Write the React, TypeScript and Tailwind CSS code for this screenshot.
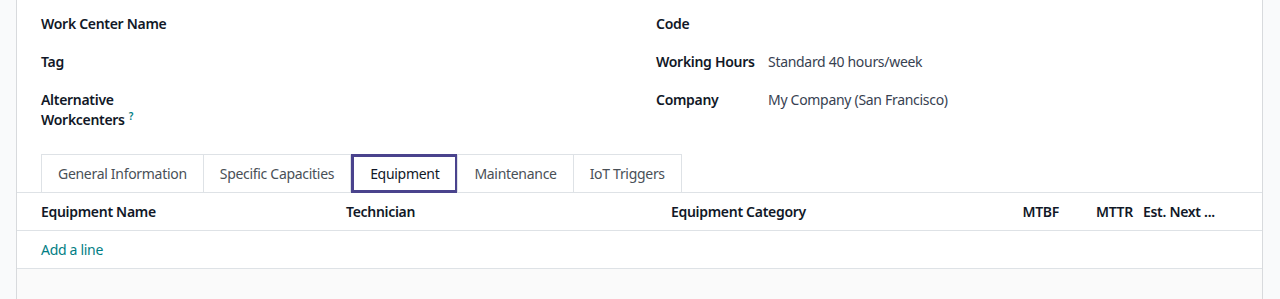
const tabs = ["General Information", "Specific Capacities", "Equipment", "Maintenance", "IoT Triggers"];

function Field({ label, value, labelClass = "w-[112px]" }: { label: React.ReactNode; value?: string; labelClass?: string }) {
  return (
    <div className="flex min-h-[38px] items-start py-[8px]">
      <div className={`${labelClass} shrink-0 text-[14px] font-semibold leading-[20px] text-[#111827]`}>{label}</div>
      {value && <div className="text-[14px] leading-[20px] text-[#374151]">{value}</div>}
    </div>
  );
}

export default function App() {
  return (
    <div className="flex h-[299px] w-[1280px] overflow-hidden bg-[#f9fafb] font-['Noto_Sans',sans-serif] tracking-[-0.3px]">
      <div className="w-4 shrink-0" />
      <div className="flex w-[1247px] shrink-0 flex-col border-x border-[#d8dadd] bg-white">
        <div className="grid grid-cols-[615px_1fr] pl-6 pt-[6px]">
          <div className="flex flex-col">
            <Field label={<span className="whitespace-nowrap">Work Center Name</span>} labelClass="w-[130px]" />
            <Field label="Tag" labelClass="w-[130px]" />
            <Field
              label={
                <>
                  Alternative Workcenters<sup className="ml-[4px] text-[10px] font-semibold text-[#017e84]">?</sup>
                </>
              }
              labelClass="w-[110px]"
            />
          </div>
          <div className="flex flex-col">
            <Field label="Code" />
            <Field label="Working Hours" value="Standard 40 hours/week" />
            <Field label="Company" value="My Company (San Francisco)" />
          </div>
        </div>

        <div className="mt-[16px] flex border-b border-[#dee2e6] pl-6">
          {tabs.map((t) => (
            <div
              key={t}
              className={
                t === "Equipment"
                  ? "-mb-px flex h-[39px] items-center border-[3px] border-[#4a438d] bg-white px-[16px] text-[14px] text-[#111827]"
                  : "-mb-px -ml-px flex h-[39px] items-center border border-[#dee2e6] bg-white px-[16px] text-[14px] text-[#495057] first:ml-0"
              }
            >
              {t}
            </div>
          ))}
        </div>

        <div className="flex h-[38px] items-center border-b border-[#dee2e6] text-[14px] font-semibold text-[#111827]">
          <div className="w-[321px] shrink-0 pl-6">Equipment Name</div>
          <div className="w-[325px] shrink-0 px-2">Technician</div>
          <div className="w-[327px] shrink-0 px-2">Equipment Category</div>
          <div className="w-[77px] shrink-0 px-2 text-right">MTBF</div>
          <div className="w-[68px] shrink-0 pr-[2px] text-right">MTTR</div>
          <div className="w-[91px] shrink-0 whitespace-nowrap px-2">Est. Next ...</div>
        </div>
        <div className="flex h-[38px] items-center border-b border-[#dee2e6] pl-6 text-[14px] text-[#017e84]">Add a line</div>
        <div className="flex-1 bg-[#fafafa]" />
      </div>
      <div className="flex-1" />
    </div>
  );
}
